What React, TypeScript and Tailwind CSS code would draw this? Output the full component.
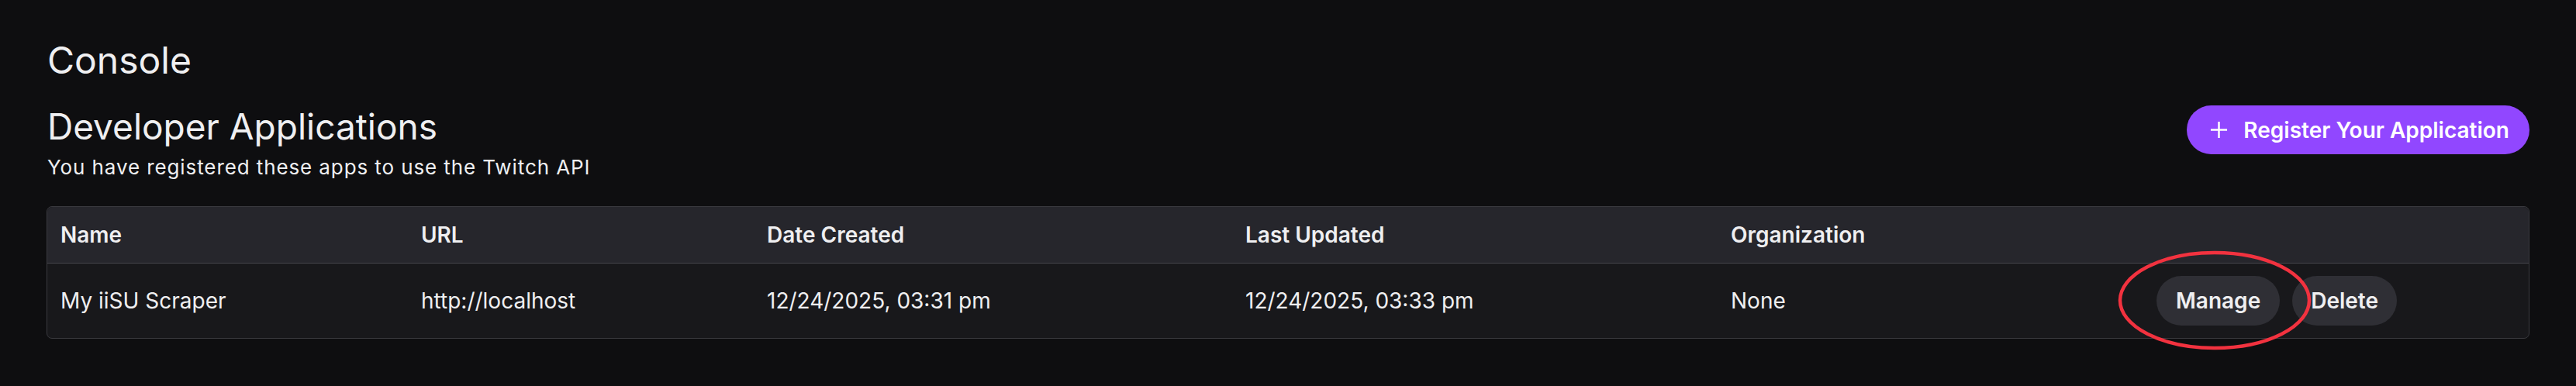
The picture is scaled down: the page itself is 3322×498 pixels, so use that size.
import React from 'react';

const cols = 'grid grid-cols-[465px_446px_617px_626px_549px_1fr]';

const App: React.FC = () => {
  return (
    <div className="min-h-screen w-full bg-[#0e0e10] px-[60px] pt-[49px] text-[#efeff1] font-['Inter','Liberation_Sans',sans-serif]">
      {/* Page title */}
      <h1 className="pl-[1px] text-[48px] leading-[58px] font-normal">Console</h1>

      {/* Section header */}
      <div className="mt-[27px] flex items-start justify-between">
        <div>
          <h2 className="pl-[1px] text-[46px] leading-[58px] font-normal">Developer Applications</h2>
          <p className="mt-[8px] pl-[1px] text-[26px] leading-[32px] tracking-[0.9px]">You have registered these apps to use the Twitch API</p>
        </div>
        <button className="mt-[2px] flex h-[63px] items-center gap-[20px] rounded-full bg-[#9147ff] pl-[30px] pr-[26px] text-[28px] font-semibold text-white">
          <svg width="23" height="23" viewBox="0 0 24 24" fill="none" stroke="currentColor" strokeWidth="2.6" strokeLinecap="butt">
            <path d="M12 1v22M1 12h22" />
          </svg>
          Register Your Application
        </button>
      </div>

      {/* Applications table */}
      <div className="mt-[34px] overflow-visible rounded-[7px] border border-[#3a3a3f] bg-[#18181b]">
        <div className={`${cols} rounded-t-[7px] border-b border-[#45454c] bg-[#26262c] text-[28px] font-semibold leading-[36px]`}>
          <div className="py-[18px] pl-[17px]">Name</div>
          <div className="py-[18px] pl-[17px]">URL</div>
          <div className="py-[18px] pl-[17px]">Date Created</div>
          <div className="py-[18px] pl-[17px]">Last Updated</div>
          <div className="py-[18px] pl-[17px]">Organization</div>
          <div />
        </div>
        <div className={`${cols} h-[96px] items-center text-[28px] leading-[36px]`}>
          <div className="pl-[17px]">My iiSU Scraper</div>
          <div className="pl-[17px]">http://localhost</div>
          <div className="pl-[17px]">12/24/2025, 03:31 pm</div>
          <div className="pl-[17px]">12/24/2025, 03:33 pm</div>
          <div className="pl-[17px]">None</div>
          <div className="flex items-center gap-[16px] pl-[17px]">
            <div className="relative">
              <button className="h-[64px] rounded-full bg-[#2f2f35] px-[25px] text-[28px] font-semibold">Manage</button>
              {/* hand-drawn highlight around Manage */}
              <svg className="pointer-events-none absolute left-[-50px] top-[-33px] z-10" width="250" height="129" viewBox="0 0 250 129" fill="none">
                <ellipse cx="125" cy="64.5" rx="122" ry="61.5" stroke="#f2323f" strokeWidth="4.5" />
              </svg>
            </div>
            <button className="h-[64px] rounded-full bg-[#2f2f35] px-[24px] text-[28px] font-semibold">Delete</button>
          </div>
        </div>
      </div>
    </div>
  );
};

export default App;
